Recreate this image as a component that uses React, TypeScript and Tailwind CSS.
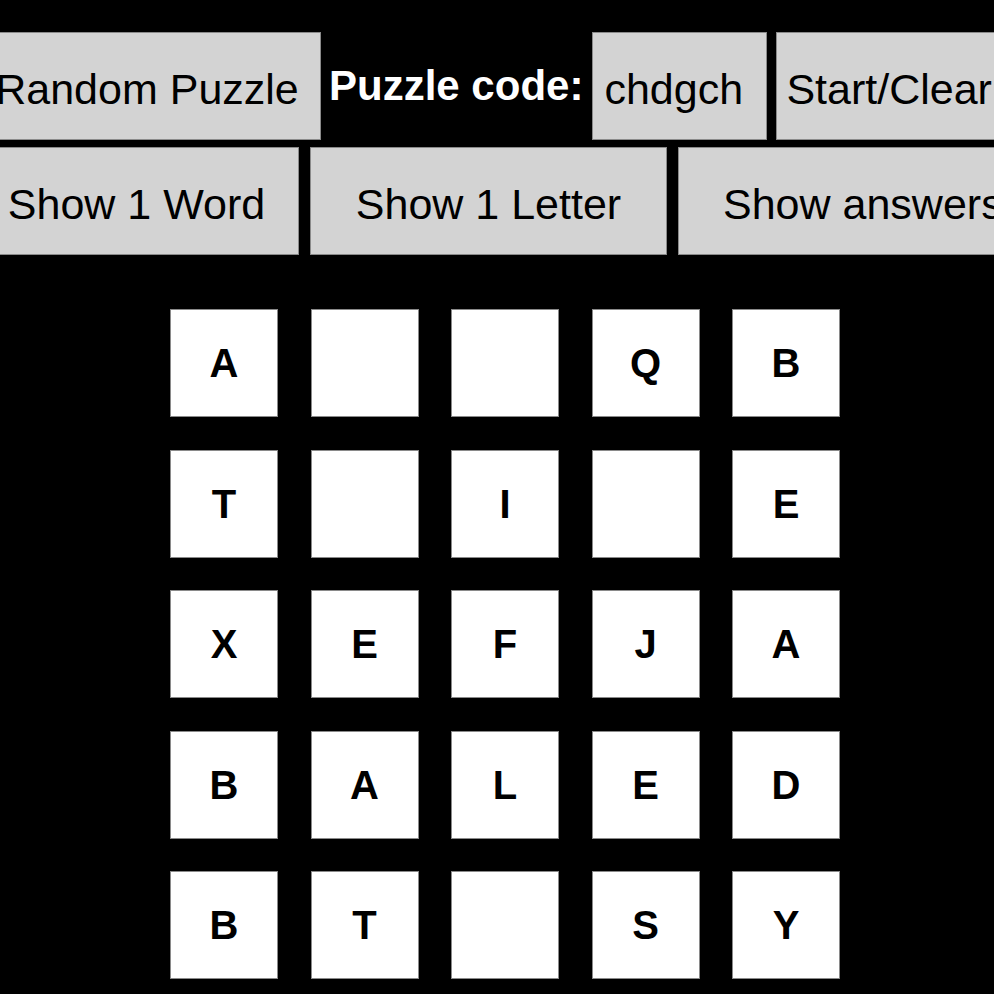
const grid = [
  ['A', '', '', 'Q', 'B'],
  ['T', '', 'I', '', 'E'],
  ['X', 'E', 'F', 'J', 'A'],
  ['B', 'A', 'L', 'E', 'D'],
  ['B', 'T', '', 'S', 'Y'],
]

const btn =
  'h-[108px] shrink-0 bg-[#d3d3d3] border border-[#8a8a8a] text-black text-[43px] leading-none flex items-center pt-[6px]'

export default function App() {
  return (
    <div className="w-[994px] h-[994px] bg-black overflow-hidden font-['Liberation_Sans',Arial,sans-serif]">
      <div className="flex items-center pt-[32px] -ml-[27px]">
        <button className={`${btn} w-[348px] justify-center`}>Random Puzzle</button>
        <span className="ml-[8px] text-white font-bold text-[42px] leading-none whitespace-nowrap">
          Puzzle code:
        </span>
        <div className={`${btn} ml-[9px] w-[175px] pl-[11px]`}>chdgch</div>
        <button className={`${btn} ml-[9px] w-[250px] pl-[9px]`}>Start/Clear</button>
      </div>

      <div className="flex mt-[7px] -ml-[26px] gap-[11px]">
        <button className={`${btn} w-[325px] justify-center`}>Show 1 Word</button>
        <button className={`${btn} w-[357px] justify-center`}>Show 1 Letter</button>
        <button className={`${btn} w-[350px] pl-[44px] whitespace-nowrap`}>Show answers</button>
      </div>

      <div className="ml-[170px] mt-[54px] grid grid-cols-[repeat(5,108px)] gap-[32.5px]">
        {grid.flat().map((ch, i) => (
          <div
            key={i}
            className="w-[108px] h-[108px] bg-white border border-[#8a8a8a] flex items-center justify-center text-black font-bold text-[40px] leading-none"
          >
            {ch}
          </div>
        ))}
      </div>
    </div>
  )
}
